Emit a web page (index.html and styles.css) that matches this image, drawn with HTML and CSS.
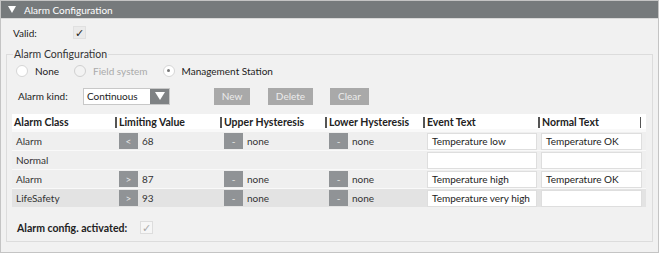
FILE: index.html
```html
<!DOCTYPE html>
<html lang="en">
<head>
    <meta charset="UTF-8">
    <title>Alarm Configuration</title>
    <link rel="stylesheet" href="styles.css">
</head>
<body>
    <div class="panel">
        <div class="panel-head">
            <span class="caret"></span>
            <span>Alarm Configuration</span>
        </div>
        <div class="panel-body">
            <div class="valid-row">
                <span class="valid-label">Valid:</span>
                <span class="check dark">&#10003;</span>
            </div>

            <fieldset class="group">
                <legend>Alarm Configuration</legend>

                <div class="radios">
                    <label class="radio"><span class="dot"></span>None</label>
                    <label class="radio disabled"><span class="dot"></span>Field system</label>
                    <label class="radio"><span class="dot on"></span>Management Station</label>
                </div>

                <div class="kind-row">
                    <span class="kind-label">Alarm kind:</span>
                    <div class="select">
                        <span class="select-text">Continuous</span>
                        <span class="select-btn"><span class="tri"></span></span>
                    </div>
                    <button class="btn btn-new">New</button>
                    <button class="btn btn-delete">Delete</button>
                    <button class="btn btn-clear">Clear</button>
                </div>

                <div class="grid">
                    <div class="th">Alarm Class</div>
                    <div class="th sep">Limiting Value</div>
                    <div class="th sep">Upper Hysteresis</div>
                    <div class="th sep">Lower Hysteresis</div>
                    <div class="th sep">Event Text</div>
                    <div class="th sep last">Normal Text</div>

                    <div class="td">Alarm</div>
                    <div class="td"><span class="op">&lt;</span>68</div>
                    <div class="td"><span class="op">-</span>none</div>
                    <div class="td"><span class="op">-</span>none</div>
                    <div class="td"><span class="txt">Temperature low</span></div>
                    <div class="td"><span class="txt">Temperature OK</span></div>

                    <div class="td">Normal</div>
                    <div class="td"></div>
                    <div class="td"></div>
                    <div class="td"></div>
                    <div class="td"><span class="txt"></span></div>
                    <div class="td"><span class="txt"></span></div>

                    <div class="td">Alarm</div>
                    <div class="td"><span class="op">&gt;</span>87</div>
                    <div class="td"><span class="op">-</span>none</div>
                    <div class="td"><span class="op">-</span>none</div>
                    <div class="td"><span class="txt">Temperature high</span></div>
                    <div class="td"><span class="txt">Temperature OK</span></div>

                    <div class="td sel">LifeSafety</div>
                    <div class="td sel"><span class="op">&gt;</span>93</div>
                    <div class="td sel"><span class="op">-</span>none</div>
                    <div class="td sel"><span class="op">-</span>none</div>
                    <div class="td sel"><span class="txt">Temperature very high</span></div>
                    <div class="td sel"><span class="txt"></span></div>
                </div>

                <div class="activated">
                    <span class="act-label">Alarm config. activated:</span>
                    <span class="check light">&#10003;</span>
                </div>
            </fieldset>
        </div>
    </div>
</body>
</html>
```

FILE: styles.css
```css
body {
    margin: 0;
    background: #ffffff;
    font-family: Lato, "Liberation Sans", sans-serif;
    font-size: 10px;
    color: #222;
    white-space: nowrap;
}

.panel {
    width: 657px;
    height: 251px;
    border: 1px solid #c4c4c4;
    background: #f1f1f1;
}

.panel-head {
    height: 17px;
    background: #767a7c;
    color: #fff;
    display: flex;
    align-items: center;
    gap: 8px;
    padding-left: 7px;
    font-size: 10px;
    border-bottom: 1px solid #d8d8d8;
}

.caret {
    width: 0;
    height: 0;
    border-left: 4px solid transparent;
    border-right: 4px solid transparent;
    border-top: 7px solid #fff;
}

.panel-body {
    padding: 0 5px;
}

.valid-row {
    display: flex;
    align-items: center;
    height: 25px;
    padding-top: 1px;
}

.valid-label {
    margin-left: 7px;
    width: 60px;
}

.check {
    width: 11px;
    height: 11px;
    font-size: 11px;
    line-height: 11px;
    text-align: center;
    background: #eaeaea;
    border: 1px solid #e0e0e0;
}

.check.dark { color: #222; }
.check.light { color: #aaa; background: #f6f6f6; border-color: #ddd; }

/* group box */
.group {
    margin: 3px 0 0 0;
    padding: 0 5px;
    border: 1px solid #dcdcdc;
    height: 194px;
    box-sizing: border-box;
    min-width: 0;
    width: 647px;
}

.group legend {
    padding: 0 1px;
    margin-left: 1px;
    color: #333;
    font-size: 10.5px;
}

.radios {
    display: flex;
    align-items: center;
    height: 17px;
    margin-top: 2px;
}

.radio {
    display: flex;
    align-items: center;
    margin-right: 11px;
    color: #222;
}

.radio.disabled { color: #aaa; }

.dot {
    width: 12px;
    height: 12px;
    box-sizing: border-box;
    border-radius: 50%;
    background: #fff;
    border: 1px solid #d6d6d6;
    margin: 0 7px 0 4px;
    display: flex;
    align-items: center;
    justify-content: center;
}

.radio.disabled .dot { background: #f3f3f3; border-color: #d0d0d0; }

.dot.on::after {
    content: "";
    width: 3px;
    height: 3px;
    border-radius: 50%;
    background: #777;
}

.kind-row {
    display: flex;
    align-items: center;
    height: 18px;
    margin-top: 8px;
}

.kind-label {
    margin-left: 6px;
    width: 65px;
}

.select {
    display: flex;
    width: 87px;
    height: 17px;
    border: 1px solid #c8c8c8;
    background: #fff;
    box-sizing: border-box;
}

.select-text {
    flex: 1;
    padding-left: 3px;
    line-height: 15px;
}

.select-btn {
    width: 19px;
    background: #7f8284;
    display: flex;
    align-items: center;
    justify-content: center;
}

.tri {
    width: 0;
    height: 0;
    border-left: 5px solid transparent;
    border-right: 5px solid transparent;
    border-top: 8px solid #fff;
}

.btn {
    height: 17px;
    border: none;
    background: #a9a9a9;
    color: #ececec;
    font-family: inherit;
    font-size: 10px;
    padding: 0;
}

.btn-new { width: 36px; margin-left: 44px; }
.btn-delete { width: 45px; margin-left: 18px; }
.btn-clear { width: 39px; margin-left: 17px; }

/* table */
.grid {
    display: grid;
    grid-template-columns: 103px 105px 105px 98px 115px 108px;
    grid-template-rows: 17px;
    grid-auto-rows: 18px;
    row-gap: 1px;
    margin-top: 9px;
    width: 634px;
    background: #f9f9f9;
}

.th {
    background: #fff;
    font-weight: bold;
    font-size: 10.5px;
    display: flex;
    align-items: center;
    padding-left: 2px;
    position: relative;
    margin-bottom: 2px;
}

.th.sep {
    padding-left: 4px;
}

.th.sep::before,
.th.last::after {
    content: "";
    position: absolute;
    left: 0;
    top: 3px;
    width: 1.5px;
    height: 11px;
    background: #555;
}

.th.last::after {
    left: auto;
    right: 5px;
}

.td {
    background: #efefef;
    display: flex;
    align-items: center;
    padding-left: 4px;
    color: #333;
    overflow: hidden;
}

.td:nth-child(6n) { padding-left: 3px; padding-right: 4px; }

.td.sel { background: #e3e3e3; }

.op {
    width: 19px;
    height: 16px;
    background: #909396;
    color: #e8e8e8;
    display: flex;
    align-items: center;
    justify-content: center;
    margin-right: 4px;
    font-size: 10px;
    flex: none;
}

.txt {
    flex: 1;
    height: 17px;
    background: #fff;
    border: 1px solid #dedede;
    box-sizing: border-box;
    padding-left: 4px;
    line-height: 15px;
    color: #222;
    margin-right: 1px;
    overflow: hidden;
}

.td:nth-child(6n) .txt { margin-right: 0; }

.activated {
    display: flex;
    align-items: center;
    margin-top: 14px;
    margin-left: 5px;
}

.act-label {
    font-weight: bold;
    font-size: 10.5px;
    width: 123px;
}
```
